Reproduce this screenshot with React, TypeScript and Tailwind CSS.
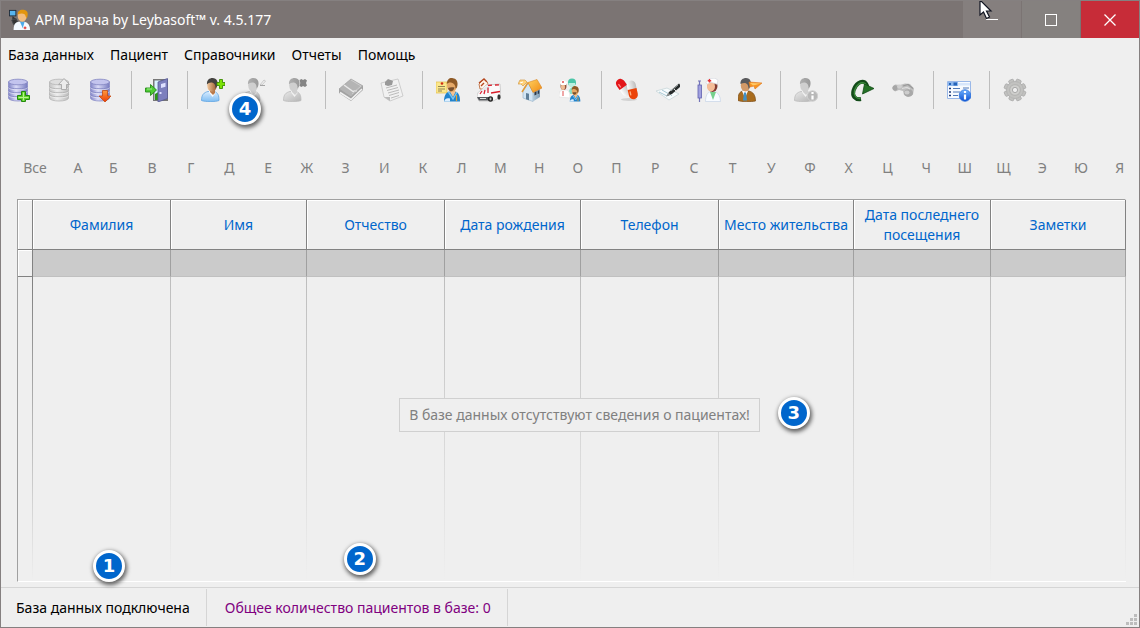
import type { ReactNode } from "react";

const LETTERS = "БВГДЕЖЗИКЛМНОПРСТУФХЦЧШЩЭЮЯ".split("");

const MENU = ["База данных", "Пациент", "Справочники", "Отчеты", "Помощь"];

const COLUMNS = [
  { title: "Фамилия", width: "w-[138px]" },
  { title: "Имя", width: "w-[136px]" },
  { title: "Отчество", width: "w-[138px]" },
  { title: "Дата рождения", width: "w-[136px]" },
  { title: "Телефон", width: "w-[138px]" },
  { title: "Место жительства", width: "w-[135px]" },
  { title: "Дата последнего посещения", width: "w-[137px]" },
  { title: "Заметки", width: "w-[135px]" },
];

function Svg({ children, className = "size-6" }: { children: ReactNode; className?: string }) {
  return (
    <svg viewBox="0 0 24 24" className={className} aria-hidden="true">
      {children}
    </svg>
  );
}

function Gradients() {
  return (
    <svg className="absolute size-0" aria-hidden="true">
      <defs>
        <linearGradient id="dbBlue"><stop offset="0" stopColor="#8285c8" /><stop offset=".4" stopColor="#d9daf7" /><stop offset="1" stopColor="#777bc0" /></linearGradient>
        <linearGradient id="dbGray"><stop offset="0" stopColor="#c4c4c4" /><stop offset=".4" stopColor="#ebebeb" /><stop offset="1" stopColor="#bcbcbc" /></linearGradient>
        <linearGradient id="skin"><stop offset="0" stopColor="#f1c79b" /><stop offset="1" stopColor="#9b5b2e" /></linearGradient>
        <linearGradient id="shirt" x2="0" y2="1"><stop offset="0" stopColor="#d8ecff" /><stop offset="1" stopColor="#7fbdf2" /></linearGradient>
        <linearGradient id="grayBody" x2="1" y2="1"><stop offset="0" stopColor="#e9e9e9" /><stop offset="1" stopColor="#b4b4b4" /></linearGradient>
        <linearGradient id="grayHair"><stop offset="0" stopColor="#b0b0b0" /><stop offset="1" stopColor="#999" /></linearGradient>
        <linearGradient id="orangeArrow" x2="0" y2="1"><stop offset="0" stopColor="#ff9a3c" /><stop offset="1" stopColor="#ea3c08" /></linearGradient>
        <linearGradient id="infoBlue" x2="0" y2="1"><stop offset="0" stopColor="#6fb2ff" /><stop offset="1" stopColor="#0b4fd0" /></linearGradient>
        <linearGradient id="roof" x2="1" y2="1"><stop offset="0" stopColor="#ffd05e" /><stop offset="1" stopColor="#f08a14" /></linearGradient>
        <linearGradient id="wall"><stop offset="0" stopColor="#b4cbdc" /><stop offset="1" stopColor="#7f9cb3" /></linearGradient>
        <linearGradient id="pillWhite"><stop offset="0" stopColor="#ffffff" /><stop offset="1" stopColor="#bdbdbd" /></linearGradient>
      </defs>
    </svg>
  );
}

function Cylinder({ gray = false }: { gray?: boolean }) {
  const line = gray ? "#b2b2b2" : "#8488c4";
  return (
    <g>
      <path d="M1.500 4v16c0 4 19 4 19 0V4z" fill={gray ? "url(#dbGray)" : "url(#dbBlue)"} stroke={gray ? "#b5b5b5" : "#8b8ec6"} strokeWidth=".8" />
      <ellipse cx="11" cy="4" rx="9.500" ry="2.800" fill={gray ? "#dedede" : "#c3c4ee"} stroke={gray ? "#b5b5b5" : "#8184c0"} strokeWidth=".8" />
      <path d="M1.500 8.500c0 3 19 3 19 0M1.500 12.500c0 3 19 3 19 0M1.500 16.500c0 3 19 3 19 0" fill="none" stroke={line} strokeWidth=".9" />
      <path d="M1.500 9.600c0 3 19 3 19 0M1.500 13.600c0 3 19 3 19 0M1.500 17.600c0 3 19 3 19 0" fill="none" stroke="#fff" strokeOpacity=".6" strokeWidth=".8" />
    </g>
  );
}

function Person({ gray = false }: { gray?: boolean }) {
  return (
    <g>
      <path d="M.5 22.500c0-6 2.500-8 6.500-9h6c4 1 5 4 5 9-3 1.500-14 1.500-17.500 0z" fill={gray ? "url(#grayBody)" : "url(#shirt)"} stroke={gray ? "#bdbdbd" : "#5fa5e2"} strokeWidth=".8" />
      <path d="M7.500 12h6l1 3-3 4-3-4z" fill={gray ? "#f2f2f2" : "#f8fbff"} />
      <path d="M9 11h5v4l-2 2-3-3z" fill={gray ? "#cfcfcf" : "#b9794a"} />
      <ellipse cx="11" cy="7.500" rx="4.800" ry="6.200" fill={gray ? "#cfcfcf" : "url(#skin)"} />
      <path d="M6 6.500C5.500 2 8.500 0 11.500 0c4.500 0 6 4 4.500 8.500l-1.500 2c.3-3.500-1-5.500-3.500-6-2-.3-4 .5-5 2z" fill={gray ? "url(#grayHair)" : "#44423f"} />
    </g>
  );
}

function DoctorFigure() {
  return (
    <g>
      <path d="M8 23.500c0-6 2-9 5-10h6.500c3 1 4.500 4 4.500 10z" fill="#2183cd" />
      <path d="M13.500 13h6.500l-3 6z" fill="#f3c292" />
      <path d="M12.500 14l4.500 7 4-7" fill="none" stroke="#78c5f4" strokeWidth="1.400" />
      <path d="M20.500 17v6" stroke="#e7a130" strokeWidth="1.200" />
      <ellipse cx="16" cy="7.500" rx="5" ry="6.300" fill="#e5a867" />
      <path d="M10.800 6C11 1 14-.5 17 .3c4 .5 5.500 4 4 9.200l-1.500 1C19.500 7 18 5 15 4.500c-2-.3-3 .5-4.200 1.500z" fill="#8f5a26" />
      <path d="M12 10c2-.8 4-.8 6.500-.5-1 4.500-5 5.500-6.500.5z" fill="#77502f" />
      <path d="M8 23.500c1-3 3-4 6-3v3z" fill="#dcefff" />
    </g>
  );
}

const icons = {
  dbAdd: (
    <Svg><Cylinder /><path d="M14.500 13.500h4v4h4v4h-4v2h-4v-2h-4v-4h4z" fill="#5fd22b" stroke="#248a0d" /><path d="M16.500 14.500v8M11.500 19.500h10" stroke="#b8f58e" strokeWidth="1" /></Svg>
  ),
  dbUp: (
    <Svg><Cylinder gray /><path d="M16 .5l5.500 6h-3v5h-5v-5h-3z" fill="#ececec" stroke="#a7a7a7" strokeWidth=".9" /></Svg>
  ),
  dbDown: (
    <Svg><Cylinder /><path d="M13.500 12.500h5v5.500h3.500l-6 6-6-6h3.500z" fill="url(#orangeArrow)" stroke="#c64a10" strokeWidth=".8" /></Svg>
  ),
  door: (
    <Svg>
      <path d="M8 1h15v22H8z" fill="#777" /><path d="M9.500 2.500h6V22h-6z" fill="#d8f3ff" /><path d="M10 16l5-3v9h-5z" fill="#2c9616" />
      <path d="M13 4l9.500-3.500v20L13 24z" fill="#7c7fbd" stroke="#595c94" strokeWidth=".8" />
      <path d="M16 6l4.500-1.200v4L16 10zM14.500 14h2v2h-2z" fill="#dde0ff" />
      <path d="M.5 10h5V6.500l6 5.500-6 5.500V14h-5z" fill="#4fcb35" stroke="#258d17" strokeWidth=".9" /><path d="M2 11h5" stroke="#a4f08e" />
    </Svg>
  ),
  patientAdd: (
    <Svg><Person /><path d="M18.500 1.500h3v3h2.500v3h-2.500v3h-3v-3h-2.500v-3h2.500z" fill="#7ce307" stroke="#3d8c05" strokeWidth=".9" /></Svg>
  ),
  patientEdit: (
    <Svg><Person gray /><path d="M18 7l4-5 1.500 1L20 7z" fill="#f2f2f2" stroke="#b9b9b9" strokeWidth=".7" /><path d="M18 7.500h5" stroke="#a5a5a5" /></Svg>
  ),
  patientRemove: (
    <Svg><Person gray /><path d="M16.500 2l2-1 1.500 1 2-1 2 1.500-1 2.500 1 2.500-2 1.500-2-1-1.500 1-2-1 .8-3z" fill="#858585" /></Svg>
  ),
  book: (
    <Svg>
      <path d="M0 11v4l12 8 12-11V8z" fill="#a2a2a2" /><path d="M1 14.500l11 7L23 11" fill="none" stroke="#f2f2f2" strokeWidth="1.600" /><path d="M0 11L12 1l12 7-12 11z" fill="#b4b4b4" stroke="#a1a1a1" strokeWidth=".7" />
      <path d="M5 7l9 6.500 4-1" fill="none" stroke="#e9e9e9" strokeWidth="1.500" /><path d="M12 2l10 6-9 8" fill="none" stroke="#cbcbcb" />
    </Svg>
  ),
  note: (
    <Svg>
      <path d="M1 5l17-4 5 17-13 5-6-4z" fill="#f1f1f1" stroke="#c4c4c4" strokeWidth=".8" /><path d="M4 19l6 4v-4z" fill="#bbb" />
      <path d="M6 10l11-3M7 12.500l11-3M8 15l11-3M9 17.500l10-3M11 20l8-2.500" stroke="#b4b4b4" strokeWidth=".9" /><path d="M5 4l3-3 5 2-1 4-4 1-3-1z" fill="#999" />
    </Svg>
  ),
  doctors: (
    <Svg>
      <path d="M0 4h11v11H0z" fill="#fbe78b" stroke="#e4bd48" strokeWidth=".7" /><path d="M2 8.500h7M2 11h7M2 13h4" stroke="#7a6c46" strokeWidth=".8" /><circle cx="6" cy="5.500" r="1.300" fill="#d12c15" /><DoctorFigure />
    </Svg>
  ),
  ambulance: (
    <Svg>
      <path d="M2 6l5-5 4 4-3 6H3z" fill="#fff4ea" stroke="#b8602e" strokeWidth=".8" /><path d="M2 5l5-4 3 3M4 8l3-3" fill="none" stroke="#b5471e" strokeWidth="1.400" />
      <path d="M0 19c0-4 2-6 4-6.500l5-5.500 14-1 1 13-8 4H2z" fill="#fafafa" stroke="#c4c4c4" strokeWidth=".8" />
      <path d="M11 7.500l4-.3M18 7l4-.2" stroke="#d81d29" strokeWidth="1.300" /><path d="M4 12.500l5-4h4l-2 4z" fill="#e5e9ec" />
      <path d="M3 16l2-3M7 16l1-4M11 15V9.500" stroke="#dc2435" strokeWidth="1.300" /><path d="M14 15l9-1.500" stroke="#d81d29" strokeWidth="1.500" />
      <path d="M0 19h13v3.500H2z" fill="#57595d" /><path d="M3 20.500h6" stroke="#ddd" /><ellipse cx="13.500" cy="21" rx="2.600" ry="2.800" fill="#242424" /><ellipse cx="13.500" cy="21" rx="1" ry="1.400" fill="#bbb" /><ellipse cx="22" cy="19" rx="1.600" ry="2.800" fill="#333" />
    </Svg>
  ),
  house: (
    <Svg>
      <path d="M5 13l5-8 5 9v9.500L5 20z" fill="#d3e6f5" stroke="#94b0c6" strokeWidth=".6" />
      <path d="M15 14l7-3v8l-7 4.500z" fill="url(#wall)" />
      <path d="M16.500 14l2-.8v3.300l-2 .9zM19.700 12.800l1.500-.6v3.200l-1.500.7z" fill="#293648" />
      <path d="M8 15l3 .8v6.400L8 21.200z" fill="#5f7f99" />
      <path d="M10 4.500l9-3 5 8.500-9 4.500z" fill="url(#roof)" stroke="#d98424" strokeWidth=".6" />
      <path d="M10 4.500L4 14" stroke="#e39a35" strokeWidth="1.500" />
      <path d="M0 6l2-4h5l2 2-4 4-2-2z" fill="#ffd27a" stroke="#d39c4b" strokeWidth=".7" /><path d="M2 5l3-1" stroke="#fff" />
    </Svg>
  ),
  staff: (
    <Svg>
      <path d="M10 13c1-5 7-5 9-1l-2 4h-6z" fill="#8be0c6" /><circle cx="13" cy="4.500" r="4" fill="#4bc6a8" /><path d="M9.500 5h6.500v3l-3 2-3-2z" fill="#baf0df" />
      <path d="M0 19c0-5 1-6 3-7h5c2 1 3 3 3 8z" fill="#fff" stroke="#ddd" strokeWidth=".6" /><ellipse cx="4.500" cy="8" rx="3" ry="4" fill="#94543c" /><ellipse cx="4" cy="9" rx="2" ry="3" fill="#efbd96" /><path d="M1 4l3-2 4 2-1 3H2z" fill="#fff" /><path d="M4 3v2M3 4h2M4 13v5" stroke="#df4e4e" />
      <g transform="translate(5.500 8) scale(.66)"><DoctorFigure /></g>
    </Svg>
  ),
  pills: (
    <Svg>
      <ellipse cx="14" cy="21.500" rx="8" ry="1.500" fill="#d2d2d2" />
      <g transform="rotate(-35 8 9)"><rect x="3.500" y="0" width="9" height="19" rx="4.500" fill="url(#pillWhite)" /><path d="M3.500 9.500v-5a4.500 4.500 0 019 0v5z" fill="#e3161a" /><path d="M6 4v4" stroke="#ff8f8f" strokeWidth="1.300" /></g>
      <g transform="rotate(-12 17 13)"><rect x="13" y="2.500" width="9" height="19" rx="4.500" fill="url(#pillWhite)" /><path d="M13 11h9v6a4.500 4.500 0 01-9 0z" fill="#ec4308" /><path d="M15 13v4" stroke="#ffaf7d" strokeWidth="1.300" /></g>
    </Svg>
  ),
  sign: (
    <Svg>
      <path d="M0 13l11-3 12 6-10 6z" fill="#f8fcfd" stroke="#c3d2d6" strokeWidth=".7" /><path d="M3 14l8 4 3-2 2 2M6 12l7 4" fill="none" stroke="#a9c9d5" />
      <path d="M11 18l2-4 10-8.500 1 1v2.500l-8 7z" fill="#272b2b" /><path d="M10 18.500l4.500-1.500-2-2.500z" fill="#8a8e8d" /><path d="M15 13l7-6" stroke="#929b9c" /><path d="M18 11l2 2" stroke="#ddd" />
    </Svg>
  ),
  nurse: (
    <Svg>
      <path d="M2.500 3v4M1 3h3M2.500 20v4" stroke="#7575b8" strokeWidth="1.200" /><rect x="1" y="7" width="3.500" height="13" fill="#a0a0df" stroke="#6262b0" strokeWidth=".8" />
      <path d="M8.500 23.500c0-6 2-9 5-10h5c3 2 5 5 5 10z" fill="#f8fbff" stroke="#c5d4e6" strokeWidth=".7" /><path d="M13 14l3 8 3-8z" fill="#76d18e" /><ellipse cx="15.500" cy="8" rx="5" ry="6" fill="#833b32" /><ellipse cx="14" cy="8.500" rx="4" ry="5" fill="#f5bd98" />
      <path d="M9 4.500L12 .5l6-.3 3 2-1 4-6-2-4 2z" fill="#fff" stroke="#d6d9df" strokeWidth=".7" /><path d="M12.500 1v3.500M10.800 2.800h3.400" stroke="#e43137" strokeWidth="1.400" />
    </Svg>
  ),
  referral: (
    <Svg>
      <path d="M0 22.500c0-7 2-9 5-9.500h6c4 1 6.500 4 6.500 10-4 1-14 1-17.500-.5z" fill="#a96c1d" stroke="#7b4c16" strokeWidth=".7" /><path d="M4 13h6l-3 7z" fill="#fff" /><path d="M6 14.500h2l1 8H5z" fill="#4291c5" />
      <ellipse cx="7.500" cy="7.500" rx="4.700" ry="6" fill="#d39a68" /><path d="M2.500 6C2 2 5 0 8 0c4.500 0 6 4 4 9l-1.500 2C10.500 6 8 3.500 2.500 6z" fill="#5a5a5c" />
      <path d="M11 4l13 1-7 6-1-3-4 1z" fill="#f79422" stroke="#df751b" strokeWidth=".6" /><path d="M12 5l11 .5-8 2z" fill="#ffca68" />
    </Svg>
  ),
  patientInfo: (
    <Svg>
      <Person gray /><circle cx="18.500" cy="18" r="5.200" fill="#b8b8b8" stroke="#cfcfcf" /><path d="M18.500 17.500v4M18.500 14v2" stroke="#fff" strokeWidth="2.200" />
    </Svg>
  ),
  refresh: (
    <Svg>
      <path d="M11 21C5 22 2 18 3.500 12.500 5.500 6 11 2 15 4.500c2 1.500 2.500 4 2 7.500" fill="none" stroke="#134b19" strokeWidth="4" />
      <path d="M10.500 20.500C6 21 3.500 17 4.500 12.500 6.500 6.500 11 3.200 15 5.500c2 2 2 4 2 7" fill="none" stroke="#3d8b3d" strokeWidth="1.300" />
      <path d="M12.500 16l2-10 9.500 4.500z" fill="#247126" stroke="#124b17" strokeWidth=".8" />
    </Svg>
  ),
  handshake: (
    <Svg>
      <path d="M1 10l3-3.500L9 7l5-1.500 5 .5 4 4.500-1 6-5 2.500-4-2-1-4-4-1-4 1.500z" fill="#bebebe" />
      <ellipse cx="4" cy="10" rx="2.500" ry="2.800" fill="#a6a6a6" /><ellipse cx="8.500" cy="8.500" rx="2.500" ry="2" fill="#cfcfcf" /><ellipse cx="17.500" cy="15" rx="4.500" ry="3.800" fill="#a8a8a8" />
      <ellipse cx="16" cy="14.500" rx="2.500" ry="2" fill="#cdcdcd" /><path d="M12 8l5-1.500 5 4" fill="none" stroke="#9a9a9a" strokeWidth="1.300" /><path d="M11 10.500l5-1 3 1.500" fill="none" stroke="#ddd" strokeWidth="1.200" />
    </Svg>
  ),
  appInfo: (
    <Svg>
      <path d="M.5 3.500h23v17H.5z" fill="#f8fbff" stroke="#9ab8e8" /><path d="M1 4h10v4H1z" fill="#8db7ed" /><path d="M2 5h2v2H2zM6.500 4.500h3.500v3H6.500z" fill="#2463b9" /><path d="M11 5h12v2.500H11z" fill="#d7e6fb" />
      <path d="M2 10.500h2M2 14h2M2 17.500h2" stroke="#1c3978" strokeWidth="1.600" /><path d="M6 10.500h7M6 14h7M6 17.500h5M16 10h6" stroke="#517ab7" strokeWidth="1.200" />
      <circle cx="18" cy="17.500" r="5.800" fill="url(#infoBlue)" stroke="#2b70da" strokeWidth=".8" /><path d="M18 16.500v5M18 13v2" stroke="#fff" strokeWidth="2.200" />
    </Svg>
  ),
  gear: (
    <Svg>
      {[0, 45, 90, 135, 180, 225, 270, 315].map((angle) => (
        <rect key={angle} x="9.500" y="1" width="5" height="5" rx="1" fill="#c2c2c0" stroke="#a6a6a6" strokeWidth=".7" transform={`rotate(${angle + 22} 12 12)`} />
      ))}
      <circle cx="12" cy="12" r="8.500" fill="#c2c2c0" stroke="#ababab" strokeWidth=".6" /><circle cx="12" cy="12" r="6" fill="#b6b6b4" /><circle cx="12" cy="12" r="4.800" fill="#cfcfcd" /><circle cx="12" cy="12" r="2.600" fill="#efefef" stroke="#999" strokeWidth=".8" />
    </Svg>
  ),
};

type Tool = { icon: keyof typeof icons; label: string; disabled?: boolean; marker?: string };

const TOOL_GROUPS: Tool[][] = [
  [
    { icon: "dbAdd", label: "Создать базу данных" },
    { icon: "dbUp", label: "Подключить базу данных", disabled: true },
    { icon: "dbDown", label: "Отключить базу данных" },
  ],
  [{ icon: "door", label: "Выход" }],
  [
    { icon: "patientAdd", label: "Добавить пациента" },
    { icon: "patientEdit", label: "Изменить пациента", disabled: true, marker: "4" },
    { icon: "patientRemove", label: "Удалить пациента", disabled: true },
  ],
  [
    { icon: "book", label: "Карта пациента", disabled: true },
    { icon: "note", label: "Заметки", disabled: true },
  ],
  [
    { icon: "doctors", label: "Врачи" },
    { icon: "ambulance", label: "Скорая помощь" },
    { icon: "house", label: "Учреждения" },
    { icon: "staff", label: "Персонал" },
  ],
  [
    { icon: "pills", label: "Лекарства" },
    { icon: "sign", label: "Диагнозы" },
    { icon: "nurse", label: "Процедуры" },
    { icon: "referral", label: "Направления" },
  ],
  [{ icon: "patientInfo", label: "Сведения о пациенте", disabled: true }],
  [
    { icon: "refresh", label: "Обновить" },
    { icon: "handshake", label: "Поддержка", disabled: true },
  ],
  [{ icon: "appInfo", label: "О программе" }],
  [{ icon: "gear", label: "Настройки" }],
];

function Marker({ value, place }: { value: string; place: string }) {
  return (
    <span className={`absolute z-10 flex size-8 items-center justify-center rounded-full border-[3px] border-white bg-[#0066cc] font-['DejaVu_Sans',sans-serif] text-lg font-bold text-white shadow-[1px_2px_4px_1px_rgba(0,0,0,0.6)] ${place}`}>
      {value}
    </span>
  );
}

function TitleBar() {
  return (
    <header className="flex h-[37px] shrink-0 items-stretch bg-[#7b7473] text-white">
      <div className="flex flex-1 items-center gap-1 pl-2">
        <Svg className="size-[22px]">
          <path d="M0 1h8v7H0z" fill="#222b36" /><path d="M1 2h6v5H1z" fill="#57b5ef" /><path d="M4 8v3h4M3 12l5-1 2 5-5 1z" fill="#333" stroke="#42464a" />
          <path d="M5 23c0-6 2-9 6-9h6c4 1 6 4 6 9z" fill="#f4faff" /><path d="M12 14l3 7 2-7z" fill="#4daae9" /><ellipse cx="14.500" cy="7.500" rx="5" ry="6.300" fill="#f2bc80" /><path d="M9.500 6C9 2 13 0 17 1c4 1 4 5 2.500 9L18 8c0-3-4-4-8.500-2z" fill="#e2950f" /><path d="M17.500 19v3M16 20.500h3" stroke="#e33b37" strokeWidth="1.300" />
        </Svg>
        <h1 className="text-sm">АРМ врача by Leybasoft™ v. 4.5.177</h1>
      </div>
      <div className="flex gap-px">
        <button type="button" aria-label="Свернуть" className="relative flex w-[58px] items-center justify-center bg-[#857f7e]">
          <span className="h-px w-3 bg-white" />
          <svg viewBox="0 0 14 22" className="absolute -top-px left-4 h-[22px] w-3.5" aria-hidden="true">
            <path d="M1 0v15l3.500-3 3 6.500 3-1.500-3-6H12z" fill="#fff" stroke="#111522" strokeWidth="1.200" />
          </svg>
        </button>
        <button type="button" aria-label="Развернуть" className="flex w-[58px] items-center justify-center bg-[#85817f]">
          <span className="size-3 border border-white" />
        </button>
        <button type="button" aria-label="Закрыть" className="flex w-[58px] items-center justify-center bg-[#c72c38]">
          <svg viewBox="0 0 12 12" className="size-3" aria-hidden="true"><path d="M.5.5l11 11M11.500.5l-11 11" stroke="#fff" strokeWidth="1.300" /></svg>
        </button>
      </div>
    </header>
  );
}

function Toolbar() {
  return (
    <div role="toolbar" aria-label="Панель инструментов" className="flex h-[38px] shrink-0">
      {TOOL_GROUPS.map((group, index) => (
        <div key={group[0].icon} className="flex">
          {index > 0 && <span className="mx-[7px] w-px bg-[#bdbdbd]" />}
          {group.map((tool) => (
            <div key={tool.icon} className="relative flex w-[41px]">
              <button type="button" aria-label={tool.label} title={tool.label} disabled={tool.disabled} className="flex flex-1 items-center justify-center pr-[5px]">
                {icons[tool.icon]}
              </button>
              {tool.marker && <Marker value={tool.marker} place="-bottom-4 -left-[7px]" />}
            </div>
          ))}
        </div>
      ))}
    </div>
  );
}

function PatientTable() {
  return (
    <div className="relative mr-[13px] ml-4 min-h-0 flex-1 border border-t-[#a0a0a0] border-r-white border-b-white border-l-[#a0a0a0]">
      <table className="h-full w-full table-fixed border-separate border-spacing-0">
        <colgroup>
          <col className="w-[15px]" />
          {COLUMNS.map((column) => <col key={column.title} className={column.width} />)}
        </colgroup>
        <thead>
          <tr className="h-[50px]">
            <td className="border-r border-b border-[#828282] p-0 shadow-[inset_1px_1px_0_#fff]" />
            {COLUMNS.map((column) => (
              <th key={column.title} scope="col" className="border-r border-b border-[#828282] p-0 text-sm leading-5 font-normal text-[#0066cc] shadow-[inset_1px_1px_0_#fff]">
                {column.title}
              </th>
            ))}
          </tr>
        </thead>
        <tbody>
          <tr className="h-[27px]">
            <td className="border-r border-b border-[#828282] p-0 shadow-[inset_1px_1px_0_#fff]" />
            {COLUMNS.map((column) => (
              <td key={column.title} className="border-r border-b border-r-[#a0a0a0] border-b-[#c0c0c0] bg-[#cbcbcb] p-0" />
            ))}
          </tr>
          <tr>
            <td className="bg-[linear-gradient(#808080,#efefef)] bg-[length:1px_100%] bg-right bg-no-repeat p-0" />
            {COLUMNS.map((column) => (
              <td key={column.title} className="bg-[linear-gradient(#bdbdbd,#efefef)] bg-[length:1px_100%] bg-right bg-no-repeat p-0" />
            ))}
          </tr>
        </tbody>
      </table>
      <div className="absolute inset-x-0 top-[198px] flex justify-center pl-4">
        <div className="relative">
          <p className="border border-[#d0d0d0] bg-[#efefef] px-[9px] py-1.5 text-sm leading-5 whitespace-nowrap text-[#808080]">
            В базе данных отсутствуют сведения о пациентах!
          </p>
          <Marker value="3" place="-right-[50px] -top-px" />
        </div>
      </div>
    </div>
  );
}

function StatusBar() {
  return (
    <footer className="relative mt-[5px] flex h-10 shrink-0 items-stretch border-t border-[#d5d5d5] text-sm">
      <div className="relative my-px flex items-center border-r border-[#d5d5d5] pr-4 pl-[15px] text-black">
        База данных подключена
        <Marker value="1" place="-top-[39px] left-[92px]" />
      </div>
      <div className="relative my-px flex items-center border-r border-[#d5d5d5] pr-4 pl-[18px] text-[#800080]">
        Общее количество пациентов в базе: 0
        <Marker value="2" place="-top-[46px] left-[137px]" />
      </div>
      <svg viewBox="0 0 11 11" className="absolute right-0.5 bottom-0.5 size-[11px]" fill="#bdbdbd" aria-hidden="true">
        <path d="M8 0h3v3H8zM4 4h3v3H4zM8 4h3v3H8zM0 8h3v3H0zM4 8h3v3H4zM8 8h3v3H8z" />
      </svg>
    </footer>
  );
}

export default function App() {
  return (
    <div className="flex h-screen min-h-[420px] flex-col overflow-hidden border border-[#858080] bg-[#efefef] font-['Noto_Sans','Open_Sans',sans-serif] text-black">
      <Gradients />
      <TitleBar />
      <nav className="flex h-[33px] shrink-0 items-center gap-4 pl-[7px] text-sm">
        {MENU.map((item) => <button key={item} type="button">{item}</button>)}
      </nav>
      <Toolbar />
      <div className="mt-12 mb-5 flex h-[22px] shrink-0 items-center pl-[7px] text-sm text-[#808080]">
        <button type="button" disabled className="w-[54px]">Все</button>
        <button type="button" disabled className="w-8">А</button>
        {LETTERS.map((letter) => (
          <button key={letter} type="button" disabled className="min-w-0 flex-1">{letter}</button>
        ))}
      </div>
      <PatientTable />
      <StatusBar />
    </div>
  );
}
